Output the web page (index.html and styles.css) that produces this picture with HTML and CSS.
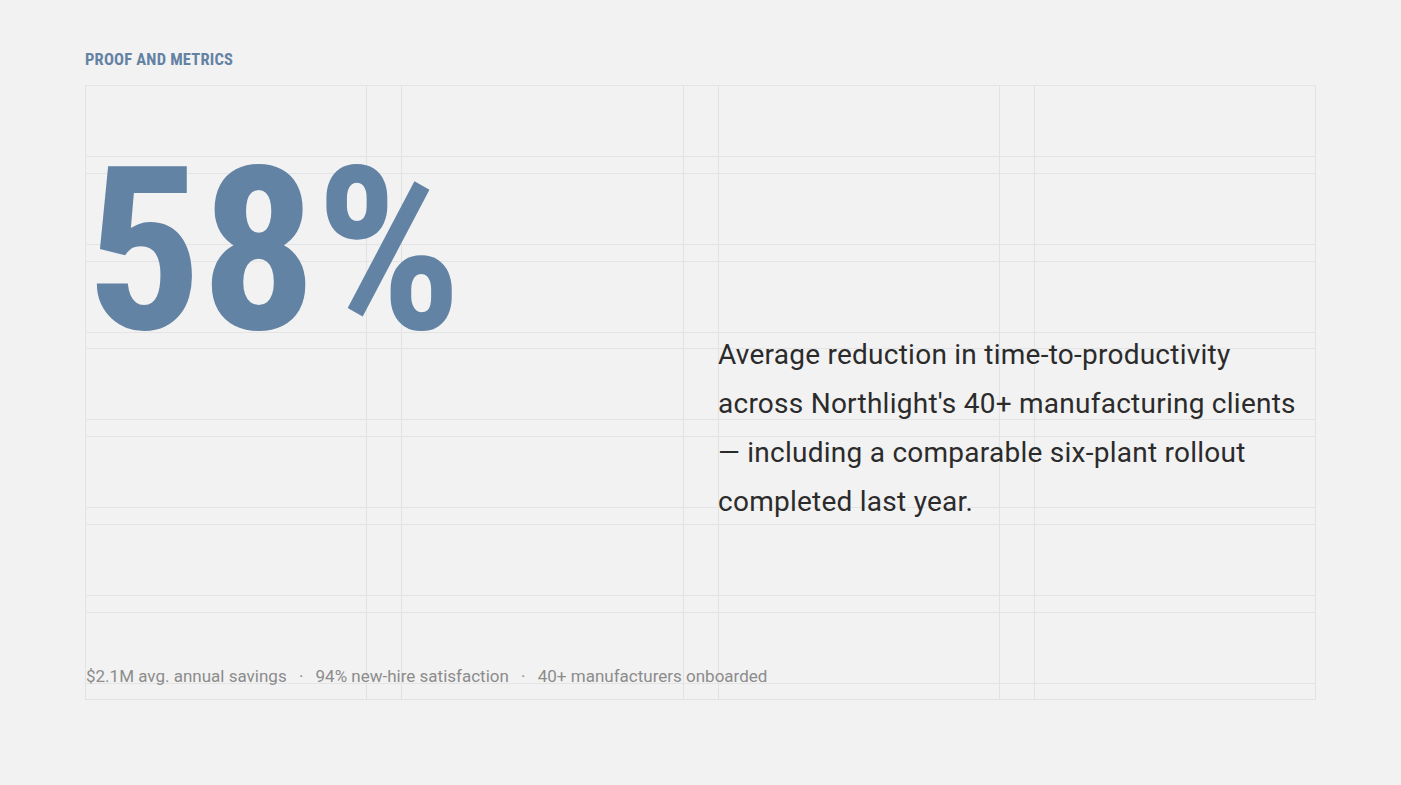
FILE: index.html
```html
<!DOCTYPE html>
<html lang="en">
<head>
<meta charset="utf-8">
<title>Proof and Metrics</title>
<link rel="stylesheet" href="styles.css">
</head>
<body>
<main class="slide">
  <h2 class="eyebrow">PROOF AND METRICS</h2>
  <section class="frame">
    <div class="guides cols" aria-hidden="true">
      <i></i><i></i><i></i><i></i>
    </div>
    <div class="guides rows" aria-hidden="true">
      <i></i><i></i><i></i><i></i><i></i><i></i><i></i>
    </div>
    <div class="stat">58%</div>
    <p class="desc">Average reduction in time-to-productivity across Northlight's 40+ manufacturing clients — including a comparable six-plant rollout completed last year.</p>
    <p class="foot">$2.1M avg. annual savings <span class="dot">·</span> 94% new-hire satisfaction <span class="dot">·</span> 40+ manufacturers onboarded</p>
  </section>
</main>
</body>
</html>
```

FILE: styles.css
```css
html, body {
  margin: 0;
  padding: 0;
  background: #f2f2f2;
}

body {
  font-family: Roboto, "Liberation Sans", sans-serif;
}

.slide {
  padding: 50px 0 0 85px;
  width: 1230px;
}

.eyebrow {
  margin: 0 0 15px;
  font-family: "Roboto Condensed", "Liberation Sans Narrow", Roboto, sans-serif;
  font-weight: 700;
  font-size: 16.5px;
  line-height: 20px;
  letter-spacing: 0.2px;
  color: #6482a4;
}

.frame {
  position: relative;
  box-sizing: border-box;
  height: 615px;
  border: 1px solid #e2e2e2;
  border-right: 0;
  display: grid;
  grid-template-columns: repeat(4, 1fr);
  column-gap: 35px;
  grid-template-rows: auto 1fr auto;
}

.guides {
  position: absolute;
  left: -1px;
  right: 0;
  top: -1px;
  display: grid;
  pointer-events: none;
}

.cols {
  bottom: -1px;
  grid-template-columns: repeat(4, 1fr);
  column-gap: 35px;
}

.cols i {
  box-shadow: inset 1px 0 #e2e2e2, 1px 0 #e2e2e2;
}

.rows {
  height: 597.8px;
  grid-template-rows: repeat(7, 1fr);
  row-gap: 16.8px;
}

.rows i {
  box-shadow: inset 0 1px #e4e4e4, 0 1px #e4e4e4;
}

.stat {
  grid-column: 1 / 3;
  grid-row: 1;
  margin: 51px 0 0 0;
  font-family: "Roboto Condensed", "Liberation Sans Narrow", Roboto, sans-serif;
  font-weight: 700;
  font-size: 229px;
  line-height: 229px;
  letter-spacing: -1px;
  color: #6383a5;
  position: relative;
}

.desc {
  grid-column: 3 / 5;
  grid-row: 1 / 3;
  align-self: start;
  margin: 0;
  padding-top: 244px;
  font-size: 28px;
  line-height: 49px;
  letter-spacing: 0.25px;
  color: #2b2b2b;
  position: relative;
}

.foot {
  grid-column: 1 / -1;
  grid-row: 3;
  margin: 0 0 13px;
  font-size: 17px;
  line-height: 20px;
  color: #8c8c8c;
  position: relative;
}

.dot {
  margin: 0 8px;
}
```
